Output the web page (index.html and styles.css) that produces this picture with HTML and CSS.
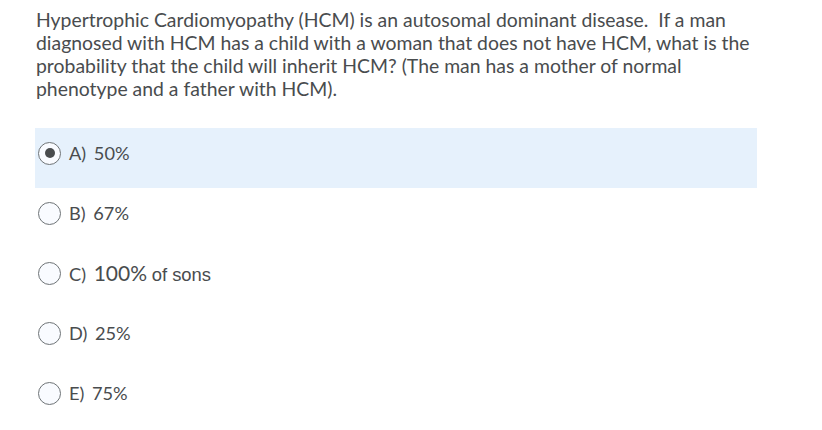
FILE: index.html
```html
<!DOCTYPE html>
<html>
<head>
<meta charset="utf-8">
<link rel="stylesheet" href="styles.css">
</head>
<body>
<div class="page">
  <p class="question">Hypertrophic Cardiomyopathy (HCM) is an autosomal dominant disease.&nbsp; If a man diagnosed with HCM has a child with a woman that does not have HCM, what is the probability that the child will inherit HCM? (The man has a mother of normal phenotype and a father with HCM).</p>
  <div class="options">
    <label class="option selected"><span class="radio checked"></span><span class="label"><span class="letter">A)</span> 50%</span></label>
    <label class="option"><span class="radio"></span><span class="label"><span class="letter">B)</span> 67%</span></label>
    <label class="option"><span class="radio"></span><span class="label"><span class="letter">C)</span> <span class="big">100%</span> <span class="alt">of sons</span></span></label>
    <label class="option"><span class="radio"></span><span class="label"><span class="letter">D)</span> 25%</span></label>
    <label class="option"><span class="radio"></span><span class="label"><span class="letter">E)</span> 75%</span></label>
  </div>
</div>
</body>
</html>
```
FILE: styles.css
```css
html, body {
  margin: 0;
  padding: 0;
  background: #ffffff;
}
.page {
  padding: 8px 0 0 35px;
  width: 722px;
  font-family: Lato, "Noto Sans", sans-serif;
  color: #494c4e;
}
.question {
  margin: 0 0 0 1px;
  font-size: 19.4px;
  line-height: 23px;
  width: 721px;
}
.options {
  margin-top: 28px;
  display: flex;
  flex-direction: column;
}
.option {
  height: 60px;
  box-sizing: border-box;
  display: flex;
  align-items: center;
  padding: 0 0 10px 3px;
  font-size: 18.2px;
}
.option.selected {
  background: #e6f1fc;
}
.radio {
  width: 23px;
  height: 23px;
  box-sizing: border-box;
  border: 1px solid #6e7376;
  border-radius: 50%;
  background: #f9fbff;
  display: flex;
  align-items: center;
  justify-content: center;
  margin-right: 8px;
  flex: none;
}
.radio.checked::after {
  content: "";
  width: 10px;
  height: 10px;
  border-radius: 50%;
  background: #494c4e;
}
.letter {
  margin-right: 3px;
}
.big {
  font-size: 21px;
}
.alt {
  font-family: "Liberation Sans Narrow", "Liberation Sans", Arial, sans-serif;
  font-size: 18.4px;
}
```
